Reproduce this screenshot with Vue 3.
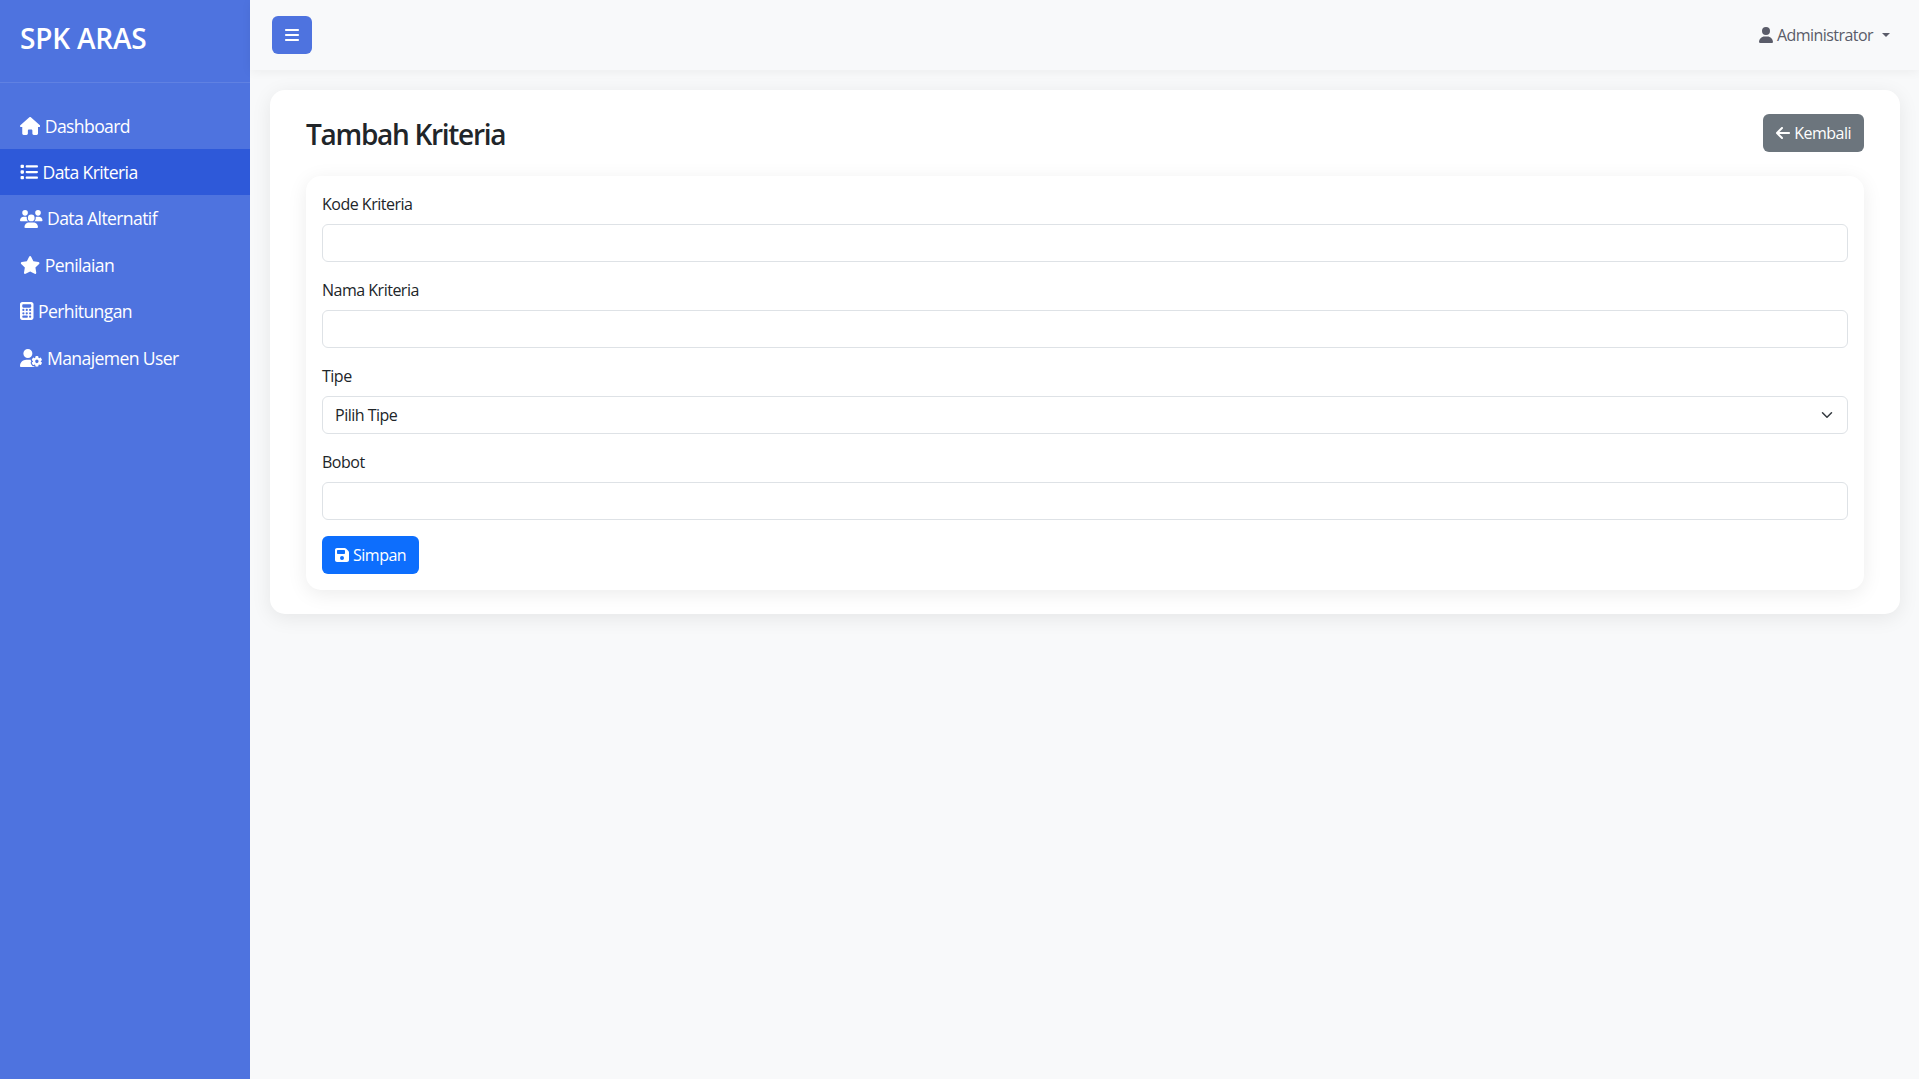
<script setup>
const icons = {
  home: ['0 0 576 512', 'M575.8 255.5c0 18-15 32.1-32 32.1h-32l.7 160.2c0 2.7-.2 5.4-.5 8.1V472c0 22.1-17.9 40-40 40H456c-1.1 0-2.2 0-3.3-.1c-1.4 .1-2.8 .1-4.2 .1H416 392c-22.1 0-40-17.9-40-40V448 384c0-17.7-14.3-32-32-32H256c-17.7 0-32 14.3-32 32v64 24c0 22.1-17.9 40-40 40H160 128.1c-1.5 0-3-.1-4.5-.2c-1.2 .1-2.4 .2-3.6 .2H104c-22.1 0-40-17.9-40-40V360c0-.9 0-1.9 .1-2.8V287.6H32c-18 0-32-14-32-32.1c0-9 3-17 10-24L266.4 8c7-7 15-8 22-8s15 2 21 7L564.8 231.5c8 7 12 15 11 24z'],
  list: ['0 0 512 512', 'M40 48C26.7 48 16 58.7 16 72v48c0 13.3 10.7 24 24 24H88c13.3 0 24-10.7 24-24V72c0-13.3-10.7-24-24-24H40zM192 64c-17.7 0-32 14.3-32 32s14.3 32 32 32H480c17.7 0 32-14.3 32-32s-14.3-32-32-32H192zm0 160c-17.7 0-32 14.3-32 32s14.3 32 32 32H480c17.7 0 32-14.3 32-32s-14.3-32-32-32H192zm0 160c-17.7 0-32 14.3-32 32s14.3 32 32 32H480c17.7 0 32-14.3 32-32s-14.3-32-32-32H192zM16 232v48c0 13.3 10.7 24 24 24H88c13.3 0 24-10.7 24-24V232c0-13.3-10.7-24-24-24H40c-13.3 0-24 10.7-24 24zM40 368c-13.3 0-24 10.7-24 24v48c0 13.3 10.7 24 24 24H88c13.3 0 24-10.7 24-24V392c0-13.3-10.7-24-24-24H40z'],
  users: ['0 0 640 512', 'M144 0a80 80 0 1 1 0 160A80 80 0 1 1 144 0zM512 0a80 80 0 1 1 0 160A80 80 0 1 1 512 0zM0 298.7C0 239.8 47.8 192 106.7 192h42.7c15.9 0 31 3.5 44.6 9.7c-1.3 7.2-1.9 14.7-1.9 22.3c0 38.2 16.8 72.5 43.3 96c-.2 0-.4 0-.7 0H21.3C9.6 320 0 310.4 0 298.7zM405.3 320c-.2 0-.4 0-.7 0c26.6-23.5 43.3-57.8 43.3-96c0-7.6-.7-15-1.9-22.3c13.6-6.3 28.7-9.7 44.6-9.7h42.7C592.2 192 640 239.8 640 298.7c0 11.8-9.6 21.3-21.3 21.3H405.3zM224 224a96 96 0 1 1 192 0 96 96 0 1 1 -192 0zM128 485.3C128 411.7 187.7 352 261.3 352H378.7C452.3 352 512 411.7 512 485.3c0 14.7-11.9 26.7-26.7 26.7H154.7c-14.7 0-26.7-11.9-26.7-26.7z'],
  star: ['0 0 576 512', 'M316.9 18C311.6 7 300.4 0 288.1 0s-23.4 7-28.8 18L195 150.3 51.4 171.5c-12 1.8-22 10.2-25.7 21.7s-.7 24.2 7.9 32.7L137.8 329 113.2 474.7c-2 12 3 24.2 12.9 31.3s23 8 33.8 2.3l128.3-68.5 128.3 68.5c10.8 5.7 23.9 4.9 33.8-2.3s14.9-19.3 12.9-31.3L438.5 329 542.7 225.9c8.6-8.5 11.7-21.2 7.9-32.7s-13.7-19.9-25.7-21.7L381.2 150.3 316.9 18z'],
  calc: ['0 0 384 512', 'M64 0C28.7 0 0 28.7 0 64V448c0 35.3 28.7 64 64 64H320c35.3 0 64-28.7 64-64V64c0-35.3-28.7-64-64-64H64zM96 64H288c17.7 0 32 14.3 32 32v32c0 17.7-14.3 32-32 32H96c-17.7 0-32-14.3-32-32V96c0-17.7 14.3-32 32-32zm32 160a32 32 0 1 1 -64 0 32 32 0 1 1 64 0zM96 352a32 32 0 1 1 0-64 32 32 0 1 1 0 64zM64 416c0-17.7 14.3-32 32-32h96c17.7 0 32 14.3 32 32s-14.3 32-32 32H96c-17.7 0-32-14.3-32-32zM192 256a32 32 0 1 1 0-64 32 32 0 1 1 0 64zm32 64a32 32 0 1 1 -64 0 32 32 0 1 1 64 0zm64-64a32 32 0 1 1 0-64 32 32 0 1 1 0 64zm32 64a32 32 0 1 1 -64 0 32 32 0 1 1 64 0zM288 448a32 32 0 1 1 0-64 32 32 0 1 1 0 64z'],
  usercog: ['0 0 640 512', 'M224 0a128 128 0 1 1 0 256A128 128 0 1 1 224 0zM178.3 304h91.4c11.8 0 23.4 1.2 34.5 3.3c-2.1 18.5 7.4 35.6 21.8 44.8c-16.6 10.6-26.7 31.6-20 53.3c4 12.9 9.4 25.5 16.4 37.6s15.2 23.1 24.4 33c15.7 16.9 39.6 18.4 57.2 8.7v.9c0 9.2 2.7 18.5 7.9 26.3H29.7C13.3 512 0 498.7 0 482.3C0 383.8 79.8 304 178.3 304zM436 218.2c0-7 4.5-13.3 11.3-14.8c10.5-2.4 21.5-3.7 32.7-3.7s22.2 1.3 32.7 3.7c6.8 1.5 11.3 7.8 11.3 14.8v30.6c7.9 3.4 15.4 7.7 22.3 12.8l24.9-14.3c6.1-3.5 13.7-2.7 18.5 2.4c7.6 8.1 14.3 17.2 20.1 27.2s10.3 20.4 13.5 31c2.1 6.7-1.1 13.7-7.2 17.2l-25 14.4c.4 4 .7 8.1 .7 12.3s-.2 8.2-.7 12.3l25 14.4c6.1 3.5 9.2 10.5 7.2 17.2c-3.3 10.6-7.8 21-13.5 31s-12.5 19.1-20.1 27.2c-4.8 5.1-12.5 5.9-18.5 2.4l-24.9-14.3c-6.9 5.1-14.3 9.4-22.3 12.8l0 30.6c0 7-4.5 13.3-11.3 14.8c-10.5 2.4-21.5 3.7-32.7 3.7s-22.2-1.3-32.7-3.7c-6.8-1.5-11.3-7.8-11.3-14.8V454.8c-8-3.4-15.6-7.7-22.5-12.9l-24.7 14.3c-6.1 3.5-13.7 2.7-18.5-2.4c-7.6-8.1-14.3-17.2-20.1-27.2s-10.3-20.4-13.5-31c-2.1-6.7 1.1-13.7 7.2-17.2l25-14.4c-.4-4-.7-8.1-.7-12.3s.2-8.2 .7-12.3l-25-14.4c-6.1-3.5-9.2-10.5-7.2-17.2c3.3-10.6 7.7-21 13.5-31s12.5-19.1 20.1-27.2c4.8-5.1 12.4-5.9 18.5-2.4l24.8 14.3c6.9-5.1 14.5-9.4 22.5-12.9V218.2zm92.1 133.5a48.1 48.1 0 1 0 -96.1 0 48.1 48.1 0 1 0 96.1 0z'],
  user: ['0 0 448 512', 'M224 256A128 128 0 1 0 224 0a128 128 0 1 0 0 256zm-45.7 48C79.8 304 0 383.8 0 482.3C0 498.7 13.3 512 29.7 512H418.3c16.4 0 29.7-13.3 29.7-29.7C448 383.8 368.2 304 269.7 304H178.3z'],
  left: ['0 0 448 512', 'M9.4 233.4c-12.5 12.5-12.5 32.8 0 45.3l160 160c12.5 12.5 32.8 12.5 45.3 0s12.5-32.8 0-45.3L109.2 288 416 288c17.7 0 32-14.3 32-32s-14.3-32-32-32l-306.7 0L214.6 118.6c12.5-12.5 12.5-32.8 0-45.3s-32.8-12.5-45.3 0l-160 160z'],
  save: ['0 0 448 512', 'M64 32C28.7 32 0 60.7 0 96V416c0 35.3 28.7 64 64 64H384c35.3 0 64-28.7 64-64V173.3c0-17-6.7-33.3-18.7-45.3L352 50.7C340 38.7 323.7 32 306.7 32H64zm0 96c0-17.7 14.3-32 32-32H288c17.7 0 32 14.3 32 32v64c0 17.7-14.3 32-32 32H96c-17.7 0-32-14.3-32-32V128zM224 288a64 64 0 1 1 0 128 64 64 0 1 1 0-128z'],
  bars: ['0 0 448 512', 'M0 96c0-17.7 14.3-32 32-32h384c17.7 0 32 14.3 32 32s-14.3 32-32 32H32c-17.7 0-32-14.3-32-32zm0 160c0-17.7 14.3-32 32-32h384c17.7 0 32 14.3 32 32s-14.3 32-32 32H32c-17.7 0-32-14.3-32-32zm448 160c0 17.7-14.3 32-32 32H32c-17.7 0-32-14.3-32-32s14.3-32 32-32h384c17.7 0 32 14.3 32 32z']
}
const nav = [
  { label: 'Dashboard', icon: 'home' },
  { label: 'Data Kriteria', icon: 'list', active: true },
  { label: 'Data Alternatif', icon: 'users' },
  { label: 'Penilaian', icon: 'star' },
  { label: 'Perhitungan', icon: 'calc' },
  { label: 'Manajemen User', icon: 'usercog' }
]
</script>

<template>
  <div class="shell">
    <aside class="sidebar">
      <div class="brand">SPK ARAS</div>
      <nav class="menu">
        <a v-for="item in nav" :key="item.label" class="menu-item" :class="{ active: item.active }">
          <svg class="ico nav-ico" :viewBox="icons[item.icon][0]"><path :d="icons[item.icon][1]" /></svg>
          <span>{{ item.label }}</span>
        </a>
      </nav>
    </aside>
    <div class="content">
      <header class="topbar">
        <button class="toggle" type="button">
          <svg class="ico" :viewBox="icons.bars[0]"><path :d="icons.bars[1]" /></svg>
        </button>
        <div class="account">
          <svg class="ico" :viewBox="icons.user[0]"><path :d="icons.user[1]" /></svg>
          <span>Administrator</span>
          <i class="caret"></i>
        </div>
      </header>
      <main class="main">
        <section class="card">
          <div class="head">
            <h2>Tambah Kriteria</h2>
            <button class="btn grey" type="button">
              <svg class="ico" :viewBox="icons.left[0]"><path :d="icons.left[1]" /></svg>
              <span>Kembali</span>
            </button>
          </div>
          <form class="panel" @submit.prevent>
            <div class="field">
              <label>Kode Kriteria</label>
              <input type="text" />
            </div>
            <div class="field">
              <label>Nama Kriteria</label>
              <input type="text" />
            </div>
            <div class="field">
              <label>Tipe</label>
              <div class="select-wrap">
                <select>
                  <option>Pilih Tipe</option>
                </select>
                <svg class="chev" viewBox="0 0 16 16"><path d="m2 5 6 6 6-6" /></svg>
              </div>
            </div>
            <div class="field">
              <label>Bobot</label>
              <input type="text" />
            </div>
            <button class="btn blue" type="submit">
              <svg class="ico" :viewBox="icons.save[0]"><path :d="icons.save[1]" /></svg>
              <span>Simpan</span>
            </button>
          </form>
        </section>
      </main>
    </div>
  </div>
</template>

<style>
html, body { margin: 0; background: #f8f9fa; }
</style>

<style scoped>
.shell {
  display: flex;
  min-height: 1079px;
  font-family: "Open Sans", "Noto Sans", sans-serif;
  font-size: 16px;
  line-height: 24px;
  color: #212529;
  background: #f8f9fa;
}
.ico { height: 1em; width: auto; display: block; fill: currentColor; flex: none; }
.nav-ico { height: 18px; }

.sidebar { width: 250px; flex: none; background: #4e73df; color: #fff; }
.brand {
  padding: 17px 20px 23px;
  font-size: 28px;
  line-height: 42px;
  font-weight: 600;
  letter-spacing: -0.2px;
  border-bottom: 1px solid rgba(255, 255, 255, 0.1);
}
.menu { margin-top: 19.6px; display: flex; flex-direction: column; }
.menu-item {
  display: flex;
  align-items: center;
  gap: 4.5px;
  padding: 10px 20px;
  font-size: 17.6px;
  line-height: 26.4px;
  letter-spacing: -0.62px;
}
.menu-item.active { background: #2e59d9; }

.content { flex: 1; min-width: 0; }
.topbar {
  height: 70px;
  box-sizing: border-box;
  padding: 0 29px 0 22px;
  display: flex;
  align-items: center;
  justify-content: space-between;
  background: #f8f9fa;
  box-shadow: 0 2px 10px rgba(0, 0, 0, 0.05);
}
.toggle {
  width: 40px;
  height: 38px;
  border: 0;
  border-radius: 6px;
  background: #4e73df;
  color: #fff;
  display: flex;
  align-items: center;
  justify-content: center;
  padding: 0;
  font-size: 16px;
}
.account { display: flex; align-items: center; gap: 4px; color: #5a5c69; letter-spacing: -0.55px; }
.caret {
  margin-left: 5px;
  width: 0;
  height: 0;
  border-top: 4.8px solid currentColor;
  border-left: 4.8px solid transparent;
  border-right: 4.8px solid transparent;
}

.main { padding: 20px 19px 20px 20px; }
.card {
  background: #fff;
  border-radius: 15px;
  padding: 24px 36px;
  box-shadow: 0 4px 20px rgba(0, 0, 0, 0.08);
}
.head { display: flex; align-items: center; justify-content: space-between; margin-bottom: 24px; }
h2 { margin: 0; padding-top: 2px; font-size: 28px; line-height: 36px; font-weight: 600; letter-spacing: -1.3px; }
.btn {
  height: 38px;
  box-sizing: border-box;
  padding: 0 12px;
  display: inline-flex;
  align-items: center;
  gap: 4px;
  border: 1px solid transparent;
  border-radius: 6px;
  color: #fff;
  font: inherit;
  letter-spacing: -0.5px;
}
.grey { background: #6c757d; }
.blue { background: #0d6efd; }

.panel {
  background: #fff;
  border-radius: 15px;
  padding: 16px;
  box-shadow: 0 4px 20px rgba(0, 0, 0, 0.08);
}
.field { margin-bottom: 16px; }
label { display: block; margin-bottom: 8px; letter-spacing: -0.5px; }
input, select {
  display: block;
  width: 100%;
  height: 38px;
  box-sizing: border-box;
  padding: 0 12px;
  border: 1px solid #dee2e6;
  border-radius: 6px;
  background: #fff;
  color: #212529;
  font: inherit;
  letter-spacing: -0.5px;
  appearance: none;
  outline: none;
}
.select-wrap { position: relative; }
.chev {
  position: absolute;
  right: 13px;
  top: 13px;
  width: 16px;
  height: 12px;
  fill: none;
  stroke: #343a40;
  stroke-width: 2;
  stroke-linecap: round;
  stroke-linejoin: round;
  pointer-events: none;
}
</style>
